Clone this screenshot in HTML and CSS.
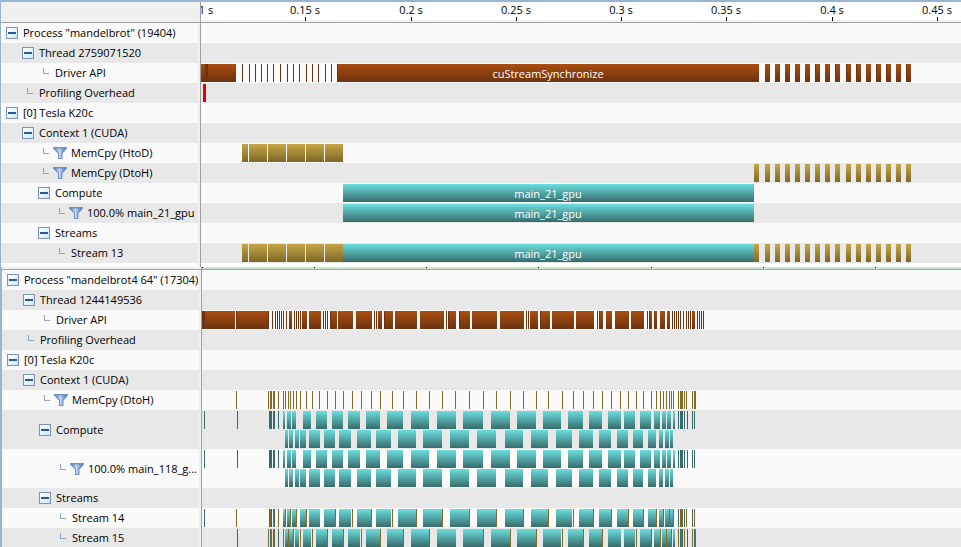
FILE: index.html
```
<!DOCTYPE html>
<html lang="en">
<head>
<meta charset="utf-8">
<title>Profiler timeline</title>
<link rel="stylesheet" href="styles.css">
</head>
<body>
<svg class="defs" aria-hidden="true">
  <defs>
    <linearGradient id="api" x2="0" y2="1"><stop offset="0" stop-color="#a94e11"/><stop offset="1" stop-color="#6d320f"/></linearGradient>
    <linearGradient id="copy" x2="0" y2="1"><stop offset="0" stop-color="#c5a547"/><stop offset="1" stop-color="#7f6826"/></linearGradient>
    <linearGradient id="kernel" x2="0" y2="1"><stop offset="0" stop-color="#6cdede"/><stop offset="1" stop-color="#376b6b"/></linearGradient>
    <linearGradient id="metal"><stop offset="0" stop-color="#5f86c2"/><stop offset=".45" stop-color="#c3d8f0"/><stop offset="1" stop-color="#4a72b4"/></linearGradient>
    <symbol id="funnel" viewBox="0 0 14 12"><path d="M0 0h14v1.500L9.500 6.500V12H5V6.500L0 1.500z" fill="#7191c2"/><path d="M1.500 1.500h11L8.500 6v5H6V6z" fill="url(#metal)"/></symbol>
  </defs>
</svg>
<main class="profiler">
  <section class="panel" data-origin="201" aria-label="mandelbrot">
    <div class="row header"><div class="label"></div><div class="lane"><svg id="ruler"></svg></div></div>
    <div class="row"><div class="label"><button class="toggle" aria-label="Collapse process"></button>Process "mandelbrot" (19404)</div><div class="lane"></div></div>
    <div class="row"><div class="label level1"><button class="toggle" aria-label="Collapse thread"></button>Thread 2759071520</div><div class="lane"></div></div>
    <div class="row"><div class="label level2"><i class="branch"></i>Driver API</div><div class="lane"><svg data-lane="driver1"></svg></div></div>
    <div class="row"><div class="label level1"><i class="branch"></i>Profiling Overhead</div><div class="lane"><svg data-lane="overhead"></svg></div></div>
    <div class="row"><div class="label"><button class="toggle" aria-label="Collapse device"></button>[0] Tesla K20c</div><div class="lane"></div></div>
    <div class="row"><div class="label level1"><button class="toggle" aria-label="Collapse context"></button>Context 1 (CUDA)</div><div class="lane"></div></div>
    <div class="row"><div class="label level2"><i class="branch"></i><svg class="funnel"><use href="#funnel"/></svg>MemCpy (HtoD)</div><div class="lane"><svg data-lane="htod"></svg></div></div>
    <div class="row"><div class="label level2"><i class="branch"></i><svg class="funnel"><use href="#funnel"/></svg>MemCpy (DtoH)</div><div class="lane"><svg data-lane="dtoh"></svg></div></div>
    <div class="row"><div class="label level2"><button class="toggle" aria-label="Collapse compute"></button>Compute</div><div class="lane"><svg data-lane="compute1"></svg></div></div>
    <div class="row"><div class="label level3"><i class="branch"></i><svg class="funnel"><use href="#funnel"/></svg>100.0% main_21_gpu</div><div class="lane"><svg data-lane="compute1"></svg></div></div>
    <div class="row"><div class="label level2"><button class="toggle" aria-label="Collapse streams"></button>Streams</div><div class="lane"></div></div>
    <div class="row"><div class="label level3"><i class="branch"></i>Stream 13</div><div class="lane"><svg data-lane="stream13"></svg></div></div>
    <div class="row tail"><div class="label"></div><div class="lane"></div></div>
  </section>
  <section class="panel second" data-origin="202" aria-label="mandelbrot4">
    <div class="row header clipped"><div class="label"></div><div class="lane"><svg id="ticks"></svg></div></div>
    <div class="row"><div class="label"><button class="toggle" aria-label="Collapse process"></button>Process "mandelbrot4 64" (17304)</div><div class="lane"></div></div>
    <div class="row"><div class="label level1"><button class="toggle" aria-label="Collapse thread"></button>Thread 1244149536</div><div class="lane"></div></div>
    <div class="row"><div class="label level2"><i class="branch"></i>Driver API</div><div class="lane"><svg data-lane="driver2"></svg></div></div>
    <div class="row"><div class="label level1"><i class="branch"></i>Profiling Overhead</div><div class="lane"></div></div>
    <div class="row"><div class="label"><button class="toggle" aria-label="Collapse device"></button>[0] Tesla K20c</div><div class="lane"></div></div>
    <div class="row"><div class="label level1"><button class="toggle" aria-label="Collapse context"></button>Context 1 (CUDA)</div><div class="lane"></div></div>
    <div class="row"><div class="label level2"><i class="branch"></i><svg class="funnel"><use href="#funnel"/></svg>MemCpy (DtoH)</div><div class="lane"><svg data-lane="memcpy2"></svg></div></div>
    <div class="row tall"><div class="label level2"><button class="toggle" aria-label="Collapse compute"></button>Compute</div><div class="lane"><svg data-lane="even"></svg><svg data-lane="odd"></svg></div></div>
    <div class="row tall"><div class="label level3"><i class="branch"></i><svg class="funnel"><use href="#funnel"/></svg>100.0% main_118_g...</div><div class="lane"><svg data-lane="even"></svg><svg data-lane="odd"></svg></div></div>
    <div class="row"><div class="label level2"><button class="toggle" aria-label="Collapse streams"></button>Streams</div><div class="lane"></div></div>
    <div class="row"><div class="label level3"><i class="branch"></i>Stream 14</div><div class="lane"><svg data-lane="stream14"></svg></div></div>
    <div class="row"><div class="label level3"><i class="branch"></i>Stream 15</div><div class="lane"><svg data-lane="stream15"></svg></div></div>
  </section>
</main>
<script src="timeline.js"></script>
</body>
</html>
```
FILE: styles.css
```
* { box-sizing: border-box; }
body {
  margin: 0;
  background: #fafafa;
  color: #000;
  font: 11px/20px "Open Sans", "Noto Sans", sans-serif;
  overflow: hidden;
}
.defs { position: absolute; width: 0; height: 0; }
.profiler { border-top: 2px solid #99b4d1; }
.panel { border-left: 1px solid #99b4d1; }
.panel.second { border-left-width: 2px; }
.row { display: flex; min-height: 20px; background: #fafafa; }
.row:nth-child(odd) { background: #e8e8e8; }
.label {
  --indent: 0px;
  flex: none;
  width: 197px;
  display: flex;
  align-items: center;
  padding-left: calc(5px + var(--indent));
  white-space: nowrap;
}
.level1 { --indent: 16px; }
.level2 { --indent: 32px; }
.level3 { --indent: 48px; }
.lane {
  flex: 1;
  min-width: 0;
  border-left: 1px solid #a0a0a0;
  box-shadow: -2px 0 #f0f0f0;
  margin-left: 2px;
  padding-top: 1px;
}
.lane svg { display: block; width: 100%; height: 18px; margin-bottom: 1px; overflow: hidden; }
.row.header { background: #f0f0f0; border-bottom: 1px solid #a0a0a0; min-height: 21px; }
.header .lane { padding: 0; }
.header .lane svg { height: 20px; margin: 0; background: linear-gradient(#fff 18px, #f0f0f0 18px); }
.row.clipped { min-height: 3px; }
.header.clipped .lane svg { height: 2px; background: #cfe6cf; }
.row.tail { min-height: 4px; background: #fff; }
.tall .label { height: 39px; }
.toggle {
  width: 12px;
  height: 12px;
  margin: 0 5px 0 0;
  padding: 0;
  border: 1px solid #7f90b0;
  background: linear-gradient(#2e5596, #2e5596) center / 8px 2px no-repeat, linear-gradient(135deg, #fff, #c8eafa);
}
.branch { width: 6px; height: 6px; margin: 0 6px 4px 5px; border: solid #8fa6c0; border-width: 0 0 1px 1px; }
.funnel { width: 14px; height: 12px; margin: 0 4px 0 -2px; }
text { fill: #fff; text-anchor: middle; font-size: 11px; }
#ruler text { fill: #000; }
.api { fill: url(#api); }
.api-edge { fill: #6d320f; }
.copy { fill: url(#copy); }
.copy-edge { fill: #836a27; }
.kernel { fill: url(#kernel); }
.kernel-edge { fill: #376b6b; }
.overhead { fill: #e60000; }
```
FILE: timeline.js
```
// Each entry is "start-end" or a single start for a one-pixel event.
const late = "765-770 775-780 785-790 795-800 805-810 815-820 825-830 835-840 846-851 856-861 866-871 876-881 886-891 896-901 906-911";
const early = "242-248 249-267 268-286 287-305 306-324 325-343";
const even = "283-285 287-291 292-296 303-311 316-327 332-343 348-360 366-380 387-403 411-429 437-456 463-483 491-510 517-536 543-561 568-583 589-602 608-621 624-635 640-651 654-660 662-666 667-671 673-675";
const odd = "285-288 289-293 295-299 300-306 309-320 324-335 339-351 357-371 376-391 398-416 423-442 450-469 477-496 505-523 531-548 556-572 579-593 599-611 617-628 633-643 648-656 659-663 665-669 670-673";

const lanes = {
  driver1: [
    ["api", "201-236 337-759 " + late],
    ["api-edge", "205-208 242 249 255 261 267 273 280 287 293 299 306 312 318 325 331 337 815 835 846 856 876 886 906"],
    ["text", "cuStreamSynchronize", 548]
  ],
  overhead: [["overhead", "203-206"]],
  htod: [["copy", early]],
  dtoh: [["copy", "754-759 " + late]],
  compute1: [["kernel", "343-754"], ["text", "main_21_gpu", 548]],
  stream13: [["copy", early + " 754-759 " + late], ["kernel", "343-754"], ["text", "main_21_gpu", 548]],
  driver2: [
    ["api", "202-235 236-269 289-292 302-307 309-321 330-337 338-353 356-372 378-382 384-393 395-417 420-444 448-456 459-470 472-497 500-524 530-538 540-550 552-574 576-594 599-603 606-612 615-629 631-644 649-652 654-657 660-665 667-670 692-695"],
    ["api-edge", "202-205 236 268 272 275 277 279 281 283 286 294 296 298 300 323 325 327 330 374 376 384 446 448 459 526 528 540 597 599 647 649 654 672 674 676 678 680 683 686 688 690 697 699 701 703"]
  ],
  memcpy2: [["copy-edge", "236 268 270-272 273-275 278 283 285 288 290 293 296 300 306 312 319 327 335 343 352 361 371 380 392 403 416 429 442 455 469 483 496 510 523 536 548 562 573 583 593 602 611 620 628 636 643 651 656 660 663 666 669 671 673 678 680-683 684 686 692 694-696"]],
  even: [["kernel", even], ["kernel-edge", "204 237 269-272 273-275 278 678 680-683 684 687 692 694"]],
  odd: [["kernel", odd]],
  stream14: [
    ["kernel", "283-285 287-290 292-296 " + odd.slice(odd.indexOf("300-306"))],
    ["kernel-edge", "204 269-272 274 678 681 684 692"],
    ["copy-edge", "236 270 273 278 285 290 296 306 335 352 371 392 416 442 469 496 523 548 573 593 611 628 643 656 663 669 673 680 682 686 694"]
  ],
  stream15: [
    ["kernel", "285-288 289-293 295-299 " + even.slice(even.indexOf("303-311"))],
    ["kernel-edge", "237 270-272 273-275 278 680-683 687 694"],
    ["copy-edge", "268 271 274 283 288 293 300 312 327 343 361 380 403 429 483 510 536 562 583 602 636 651 660 666 671 678 681 684 692 695"]
  ]
};

function add(svg, name, attributes, content) {
  const node = document.createElementNS("http://www.w3.org/2000/svg", name);
  for (const key in attributes) node.setAttribute(key, attributes[key]);
  if (content) node.textContent = content;
  svg.append(node);
}

for (const svg of document.querySelectorAll("[data-lane]")) {
  const origin = Number(svg.closest(".panel").dataset.origin);
  for (const [kind, value, center] of lanes[svg.dataset.lane]) {
    if (kind === "text") {
      add(svg, "text", { x: center - origin, y: 14 }, value);
      continue;
    }
    for (const span of value.split(" ")) {
      const [start, end = start + 1] = span.split("-").map(Number);
      add(svg, "rect", { class: kind, x: start - origin, width: end - start, height: 18 });
    }
  }
}

const ruler = document.getElementById("ruler");
[[206, "1 s"], [305, "0.15 s"], [411, "0.2 s"], [516, "0.25 s"], [621, "0.3 s"], [726, "0.35 s"], [832, "0.4 s"], [937, "0.45 s"]].forEach(([x, label], index) => {
  add(ruler, "text", { x: x - 201, y: 12 }, label);
  if (index) add(ruler, "rect", { x: x - 201, y: 15, width: 1, height: 4 });
});

const ticks = document.getElementById("ticks");
for (const x of [202, 314, 426, 538, 651, 763, 875]) {
  add(ticks, "rect", { x: x - 202, width: 1, height: 1 });
}
```
